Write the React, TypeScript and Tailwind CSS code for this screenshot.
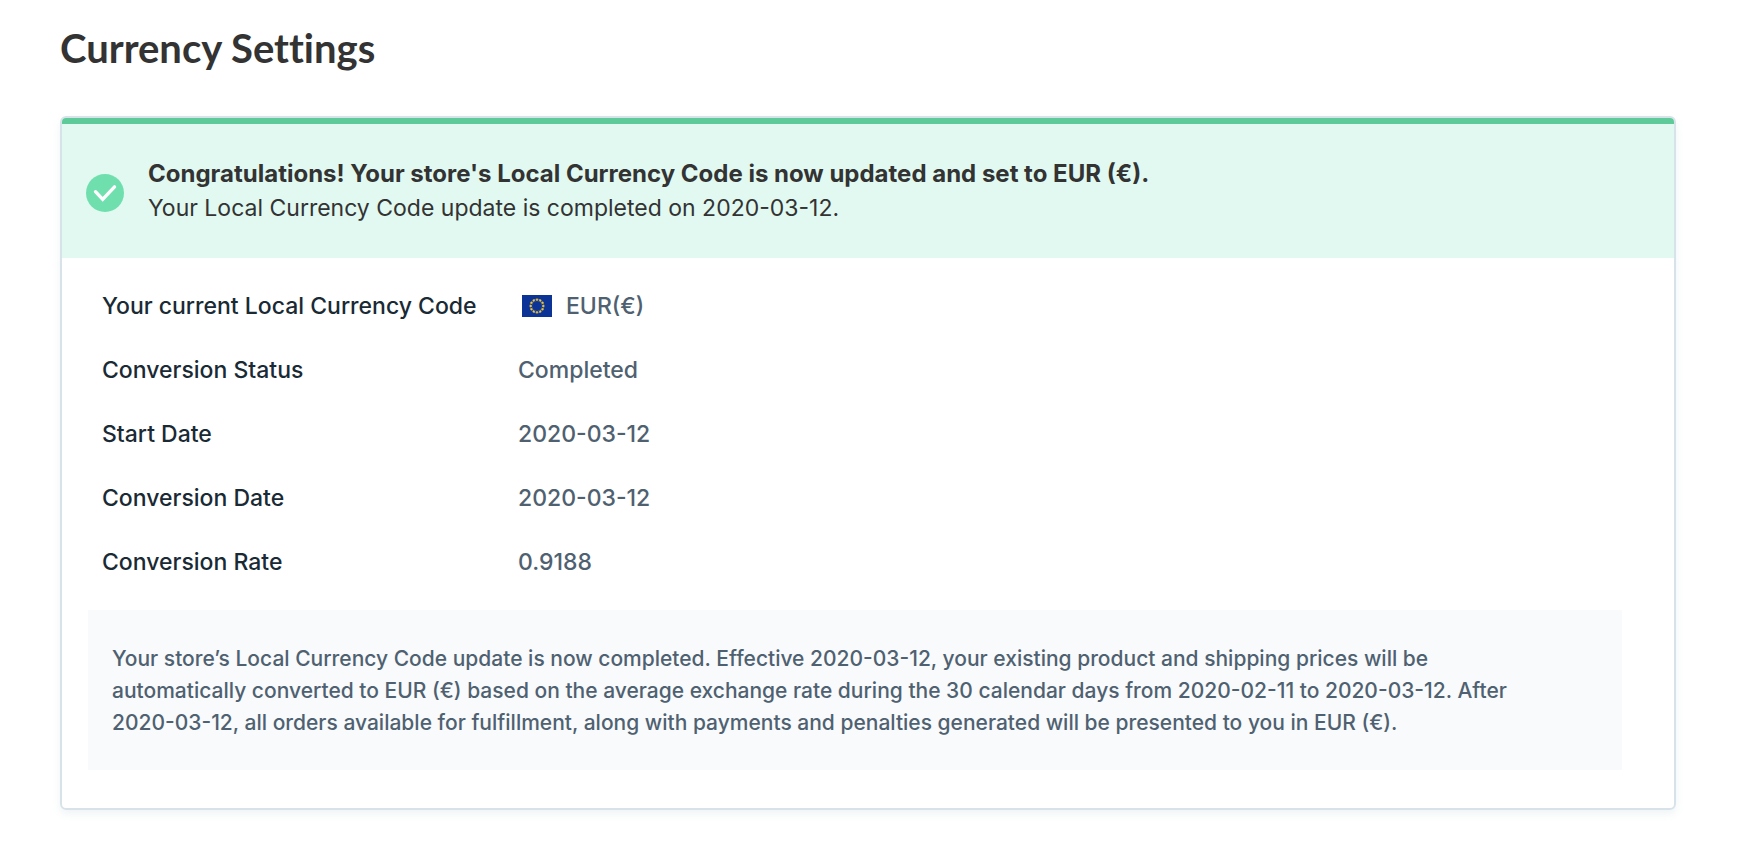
const details = [
  { label: "Conversion Status", value: "Completed" },
  { label: "Start Date", value: "2020-03-12" },
  { label: "Conversion Date", value: "2020-03-12" },
  { label: "Conversion Rate", value: "0.9188" },
];

const starAngles = [0, 30, 60, 90, 120, 150, 180, 210, 240, 270, 300, 330];

function CheckIcon() {
  return (
    <svg className="mt-1 h-[38px] w-[38px] shrink-0" viewBox="0 0 38 38" fill="none" aria-hidden="true">
      <circle cx="19" cy="19" r="19" fill="#70dfae" />
      <path d="M9.5 17.7L16.7 25.3L28.5 12.9" stroke="#fff" strokeWidth="3.4" strokeLinecap="round" />
    </svg>
  );
}

function EuFlag() {
  return (
    <svg className="h-[22px] w-[30px]" viewBox="0 0 30 22" role="img" aria-label="European Union">
      <rect width="30" height="22" fill="#0b3496" />
      {starAngles.map((angle) => (
        <path
          key={angle}
          d="M15 3.1l.4 1.05 1.15.05-.9.7.3 1.1-.95-.63-.95.63.3-1.1-.9-.7 1.15-.05z"
          fill="#ffd23c"
          stroke="#ffd23c"
          strokeWidth="0.2"
          transform={`rotate(${angle} 15 11)`}
        />
      ))}
    </svg>
  );
}

export default function App() {
  return (
    <main className="min-h-screen bg-white pt-6 pr-[62px] pb-12 pl-[60px] font-['Inter','Lato',sans-serif] text-[23px] text-[#333]">
      <h1 className="font-['Lato',sans-serif] text-[40px] leading-[48px] font-bold [font-variant-ligatures:none]">
        Currency Settings
      </h1>

      <section className="mt-11 overflow-hidden rounded-md border-2 border-[#d8e3e9] shadow-[0_4px_8px_rgba(175,199,209,0.2)]">
        <div className="flex items-center gap-6 border-t-6 border-[#5fca99] bg-[#e1f9f1] px-6 py-[33px]">
          <CheckIcon />
          <div className="leading-[34px]">
            <p className="text-[24px] font-bold">
              Congratulations! Your store's Local Currency Code is now updated and set to EUR (€).
            </p>
            <p>Your Local Currency Code update is completed on 2020-03-12.</p>
          </div>
        </div>

        <dl className="grid grid-cols-[416px_1fr] gap-y-8 px-10 pt-8 leading-8 font-medium">
          <dt className="text-[#192a35]">Your current Local Currency Code</dt>
          <dd className="flex items-center gap-3.5 pl-1 text-[#4f6170]">
            <EuFlag />
            EUR(€)
          </dd>
          {details.map(({ label, value }) => (
            <div key={label} className="contents">
              <dt className="text-[#192a35]">{label}</dt>
              <dd className="text-[#4f6170]">{value}</dd>
            </div>
          ))}
        </dl>

        <div className="mt-8 mr-[52px] mb-[38px] ml-[26px] bg-[#f8fafc] pt-[33px] pr-24 pb-[31px] pl-6 text-[21px] leading-8 font-medium text-[#4f6170]">
          <p>
            Your store’s Local Currency Code update is now completed. Effective 2020-03-12, your existing product and
            shipping prices will be automatically converted to EUR (€) based on the average exchange rate during the 30
            calendar days from 2020-02-11 to 2020-03-12. After 2020-03-12, all orders available for fulfillment, along
            with payments and penalties generated will be presented to you in EUR (€).
          </p>
        </div>
      </section>
    </main>
  );
}
